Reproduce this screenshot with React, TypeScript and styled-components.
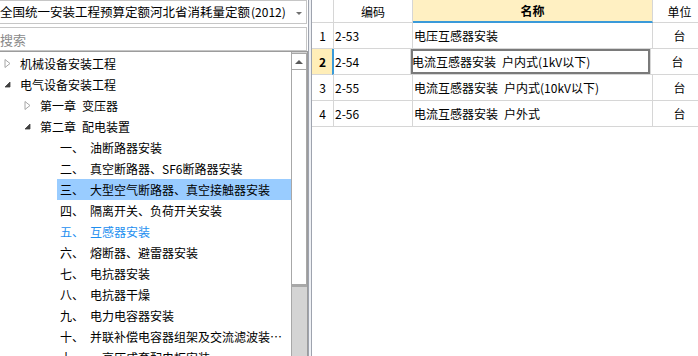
import React from "react";
import styled, { createGlobalStyle } from "styled-components";

const Global = createGlobalStyle`
  html, body { margin: 0; padding: 0; background: #fff; overflow: hidden; }
  body {
    font-family: "Noto Sans CJK SC", "Noto Sans", sans-serif;
    font-size: 12px;
    color: #000;
  }
  * { box-sizing: border-box; }
`;

const Shell = styled.div`
  display: flex;
  width: 698px;
  height: 356px;
  overflow: hidden;
  background: #fff;
`;

const LeftPanel = styled.div`
  width: 308px;
  flex: none;
  display: flex;
  flex-direction: column;
  background: #fff;
`;

const Dropdown = styled.div`
  height: 24px;
  margin-left: -2px;
  margin-right: 1px;
  border: 1px solid #c6c6c6;
  display: flex;
  align-items: center;
  padding-left: 1px;
  font-size: 12.5px;
  line-height: 22px;
  white-space: nowrap;
`;

const DropText = styled.span`
  flex: 1;
  overflow: hidden;
`;

const DropYear = styled.span`
  font-size: 12px;
  padding-left: 1px;
`;

const DropArrow = styled.span`
  width: 0;
  height: 0;
  border-left: 3px solid transparent;
  border-right: 3px solid transparent;
  border-top: 3px solid #707070;
  margin-right: 4px;
  margin-top: 2px;
`;

const SearchBox = styled.div`
  height: 24px;
  margin-top: 3px;
  margin-left: -2px;
  margin-right: 1px;
  border: 1px solid #c6c6c6;
  display: flex;
  align-items: center;
  padding-left: 1px;
  font-size: 13px;
  color: #8a8a8a;
`;

const TreePanel = styled.div`
  flex: 1;
  min-height: 0;
  display: flex;
  border-top: 1px solid #9c9c9c;
  border-right: 1px solid #9c9c9c;
`;

const TreeList = styled.div`
  flex: 1;
  min-width: 0;
  padding-top: 1px;
  overflow: hidden;
`;

const TreeRow = styled.div`
  height: 21px;
  display: flex;
  align-items: stretch;
`;

const Expander = styled.span<{ $level: number }>`
  width: 20px;
  flex: none;
  margin-left: ${(p) => p.$level * 20}px;
  display: flex;
  align-items: center;
  padding-left: 4px;
`;

const NodeBox = styled.div<{ $selected?: boolean; $hot?: boolean }>`
  flex: 1;
  min-width: 0;
  margin-left: -3px;
  padding: 0 8px 0 3px;
  line-height: 21px;
  white-space: nowrap;
  overflow: hidden;
  text-overflow: ellipsis;
  background: ${(p) => (p.$selected ? "#99ccff" : "transparent")};
  color: ${(p) => (p.$hot ? "#1e8ff0" : "#000")};
`;

const ScrollBar = styled.div`
  width: 16px;
  flex: none;
  display: flex;
  flex-direction: column;
  background: #d4d4d4;
  border-left: 1px solid #a8a8a8;
`;

const ScrollButton = styled.div`
  height: 17px;
  background: #fff;
  border: 1px solid #a8a8a8;
  border-left: none;
  margin-top: 1px;
  display: flex;
  align-items: center;
  justify-content: center;
`;

const UpArrow = styled.span`
  width: 0;
  height: 0;
  border-left: 4px solid transparent;
  border-right: 4px solid transparent;
  border-bottom: 4px solid #5a5a5a;
`;

const Thumb = styled.div`
  height: 217px;
  background: #fff;
  border-right: 1px solid #a8a8a8;
  border-bottom: 3px solid #a8a8a8;
`;

const Splitter = styled.div`
  width: 4px;
  flex: none;
  background: #eef0f4;
  border-left: 1px solid #9ea3ae;
  border-right: 1px solid #9ea3ae;
`;

const RightPanel = styled.div`
  flex: 1;
  min-width: 0;
  overflow: hidden;
  background: #fff;
`;

const Row = styled.div<{ $h: number }>`
  display: flex;
  height: ${(p) => p.$h}px;
`;

type CellProps = {
  $w: number;
  $align?: "left" | "center";
  $bg?: string;
  $bold?: boolean;
  $accentLeft?: boolean;
  $focus?: boolean;
  $underline?: boolean;
};

const Cell = styled.div<CellProps>`
  width: ${(p) => p.$w}px;
  flex: none;
  border-right: 1px solid #d6d6d6;
  border-bottom: ${(p) => (p.$underline ? "2px solid #3a9ad9" : "1px solid #d6d6d6")};
  background: ${(p) => p.$bg ?? "#fff"};
  display: flex;
  align-items: center;
  justify-content: ${(p) => (p.$align === "center" ? "center" : "flex-start")};
  padding-left: ${(p) => (p.$align === "center" ? 0 : 1)}px;
  font-weight: ${(p) => (p.$bold ? 700 : 400)};
  white-space: nowrap;
  overflow: hidden;
  border-left: ${(p) => (p.$accentLeft ? "2px solid #3a9ad9" : "none")};
  box-shadow: ${(p) => (p.$focus ? "inset 0 0 0 2px #7a7a7a" : "none")};
  margin-left: ${(p) => (p.$accentLeft ? -2 : 0)}px;
`;

const Collapsed = () => (
  <svg width="7" height="9" viewBox="0 0 7 9">
    <path d="M1 0.5 L6 4.5 L1 8.5 Z" fill="#fff" stroke="#a6a6a6" />
  </svg>
);

const Expanded = () => (
  <svg width="7" height="7" viewBox="0 0 7 7">
    <path d="M6 1 L6 6 L1 6 Z" fill="#404040" stroke="#404040" strokeWidth="0.8" />
  </svg>
);

type Node = {
  level: number;
  text: string;
  state?: "open" | "closed";
  selected?: boolean;
  hot?: boolean;
};

const E = "\u2002";

const nodes: Node[] = [
  { level: 0, text: "机械设备安装工程", state: "closed" },
  { level: 0, text: "电气设备安装工程", state: "open" },
  { level: 1, text: `第一章${E}变压器`, state: "closed" },
  { level: 1, text: `第二章${E}配电装置`, state: "open" },
  { level: 2, text: `一、${E}油断路器安装` },
  { level: 2, text: `二、${E}真空断路器、SF6断路器安装` },
  { level: 2, text: `三、${E}大型空气断路器、真空接触器安装`, selected: true },
  { level: 2, text: `四、${E}隔离开关、负荷开关安装` },
  { level: 2, text: `五、${E}互感器安装`, hot: true },
  { level: 2, text: `六、${E}熔断器、避雷器安装` },
  { level: 2, text: `七、${E}电抗器安装` },
  { level: 2, text: `八、${E}电抗器干燥` },
  { level: 2, text: `九、${E}电力电容器安装` },
  { level: 2, text: `十、${E}并联补偿电容器组架及交流滤波装置安装` },
  { level: 2, text: `十一、${E}高压成套配电柜安装` },
];

const rows = [
  { n: "1", code: "2-53", name: "电压互感器安装", unit: "台" },
  { n: "2", code: "2-54", name: `电流互感器安装${E}户内式(1kV以下)`, unit: "台", current: true },
  { n: "3", code: "2-55", name: `电流互感器安装${E}户内式(10kV以下)`, unit: "台" },
  { n: "4", code: "2-56", name: `电流互感器安装${E}户外式`, unit: "台" },
];

const W = { num: 22, code: 79, name: 240, unit: 54 };

export default function App() {
  return (
    <>
      <Global />
      <Shell>
        <LeftPanel>
          <Dropdown>
            <DropText>
              全国统一安装工程预算定额河北省消耗量定额<DropYear>(2012)</DropYear>
            </DropText>
            <DropArrow />
          </Dropdown>
          <SearchBox>搜索</SearchBox>
          <TreePanel>
            <TreeList>
              {nodes.map((nd, i) => (
                <TreeRow key={i}>
                  <Expander $level={nd.level}>
                    {nd.state === "closed" && <Collapsed />}
                    {nd.state === "open" && <Expanded />}
                  </Expander>
                  <NodeBox $selected={nd.selected} $hot={nd.hot}>
                    {nd.text}
                  </NodeBox>
                </TreeRow>
              ))}
            </TreeList>
            <ScrollBar>
              <ScrollButton>
                <UpArrow />
              </ScrollButton>
              <Thumb />
            </ScrollBar>
          </TreePanel>
        </LeftPanel>
        <Splitter />
        <RightPanel>
          <Row $h={23}>
            <Cell $w={W.num} $align="center" />
            <Cell $w={W.code} $align="center">编码</Cell>
            <Cell $w={W.name} $align="center" $bg="#fff0c2" $bold $underline>
              名称
            </Cell>
            <Cell $w={W.unit} $align="center">单位</Cell>
          </Row>
          {rows.map((r) => (
            <Row $h={26} key={r.n}>
              <Cell
                $w={W.num}
                $align="center"
                $bg={r.current ? "#ffeeb8" : "#fff"}
                $bold={r.current}
              >
                {r.n}
              </Cell>
              <Cell $w={W.code} $accentLeft={r.current}>
                {r.code}
              </Cell>
              <Cell $w={W.name} $focus={r.current}>
                {r.name}
              </Cell>
              <Cell $w={W.unit} $align="center">
                {r.unit}
              </Cell>
            </Row>
          ))}
        </RightPanel>
      </Shell>
    </>
  );
}
